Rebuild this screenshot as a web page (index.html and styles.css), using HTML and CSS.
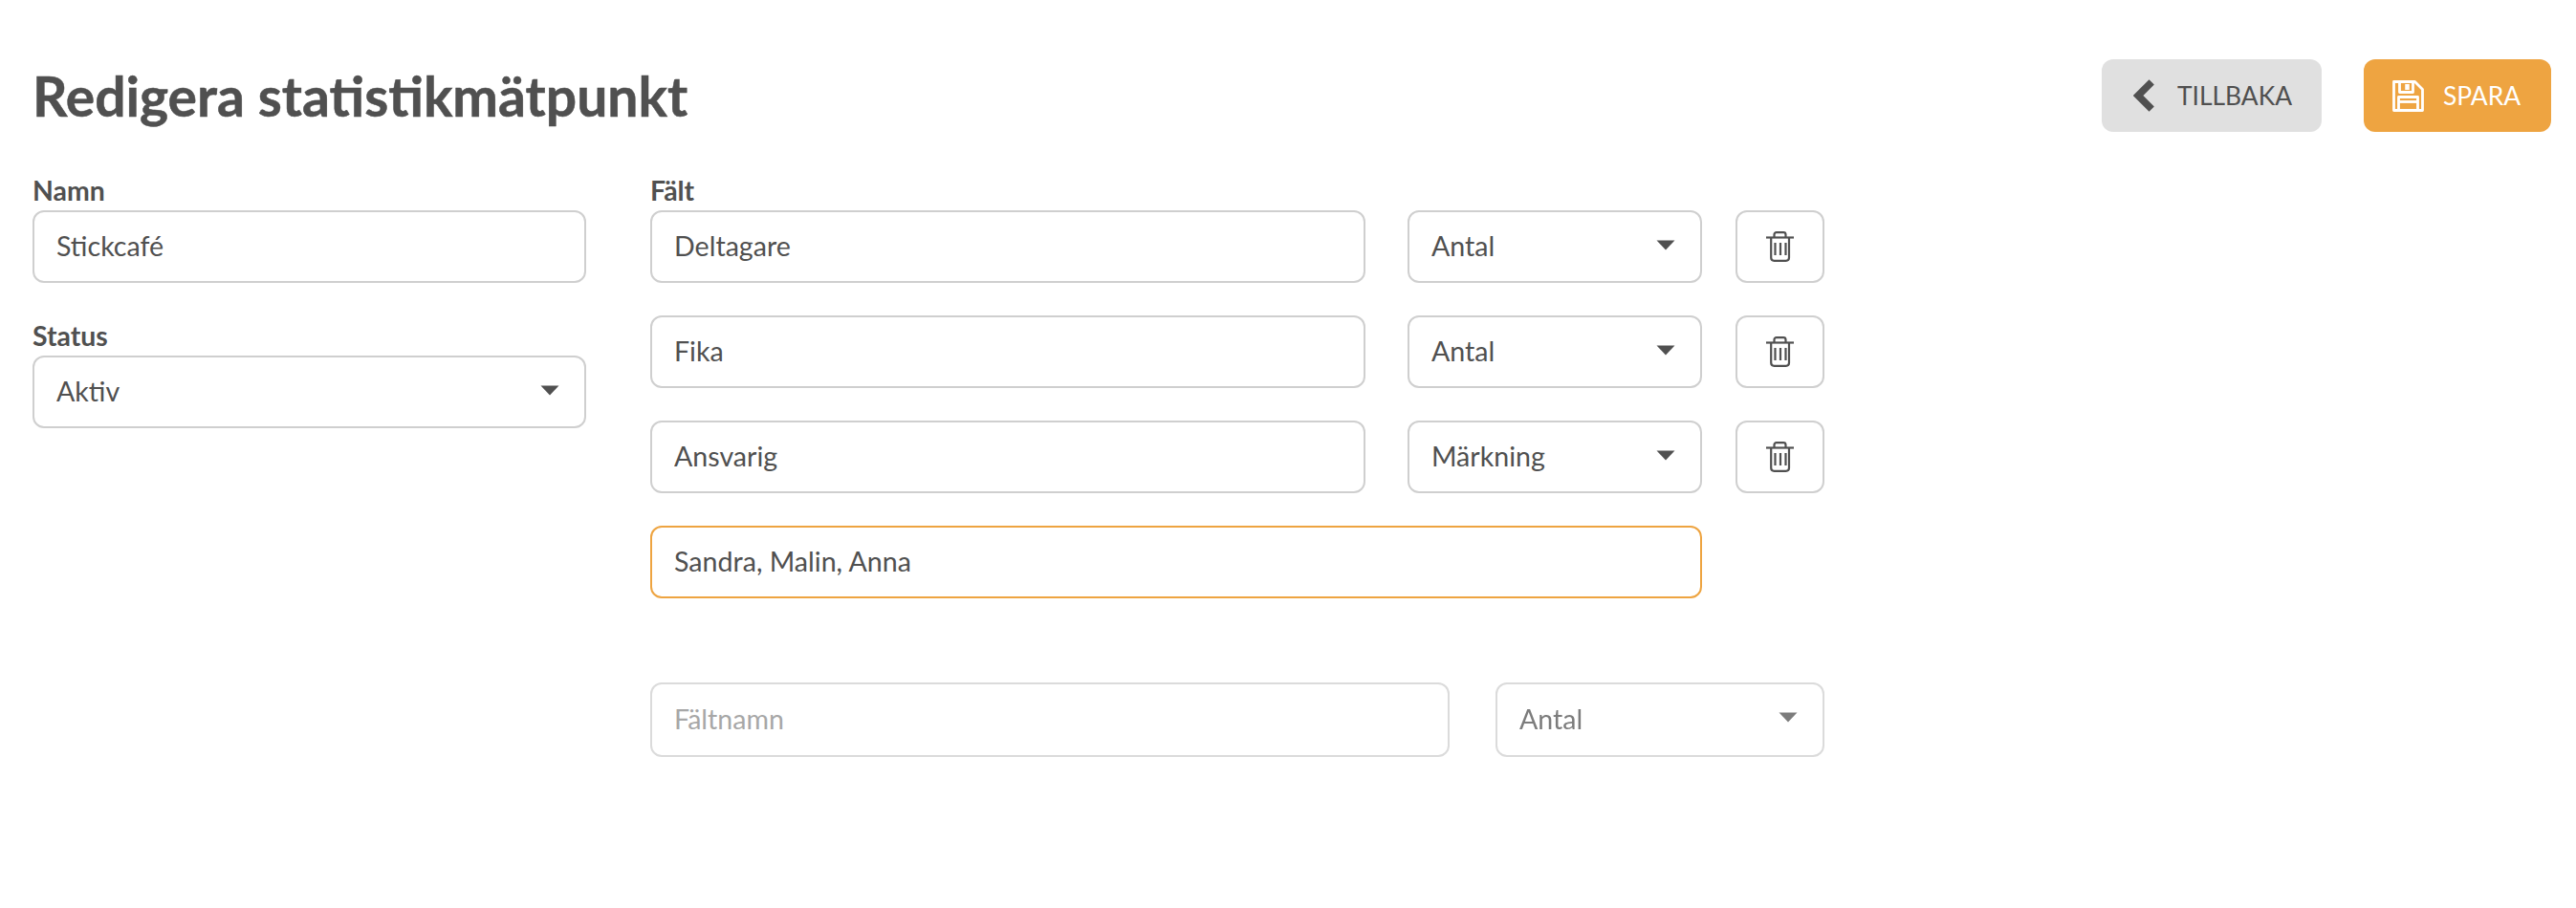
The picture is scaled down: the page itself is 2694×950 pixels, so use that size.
FILE: index.html
```html
<!DOCTYPE html>
<html lang="sv">
<head>
<meta charset="utf-8">
<title>Redigera statistikmätpunkt</title>
<link rel="stylesheet" href="styles.css">
</head>
<body>
<main class="page">
  <header class="head">
    <h1 class="title">Redigera statistikmätpunkt</h1>
    <div class="actions">
      <button class="btn btn-back" type="button">
        <svg class="ico-back" viewBox="0 0 22 34"><path d="M19.200 2.800 5 17l14.200 14.200" fill="none" stroke="currentColor" stroke-width="7.500"/></svg>
        TILLBAKA
      </button>
      <button class="btn btn-save" type="button">
        <svg class="ico-save" viewBox="0 0 33 33" fill="none" stroke="currentColor" stroke-width="2.800" stroke-linejoin="round"><path d="M1.500 1.500h22l8 8v22h-30z"/><path d="M7.500 1.500v11h14v-11"/><path d="M15.500 4v6" stroke-width="4.500"/><path d="M6.500 31.500v-14h20v14"/><path d="M6.500 22.500h20"/></svg>
        SPARA
      </button>
    </div>
  </header>
  <div class="cols">
    <section class="col-left">
      <label class="lbl">Namn</label>
      <input class="ctl ctl-name" value="Stickcafé">
      <label class="lbl lbl-status">Status</label>
      <div class="sel-wrap">
        <select class="ctl sel"><option>Aktiv</option></select>
        <svg class="caret" viewBox="0 0 20 11"><path d="M.5.500h19l-9.500 10z" fill="currentColor"/></svg>
      </div>
    </section>
    <section class="col-right">
      <label class="lbl">Fält</label>
      <div class="row">
        <input class="ctl f-name" value="Deltagare">
        <div class="sel-wrap f-type">
          <select class="ctl sel"><option>Antal</option></select>
          <svg class="caret" viewBox="0 0 20 11"><path d="M.5.500h19l-9.500 10z" fill="currentColor"/></svg>
        </div>
        <button class="del" type="button"><svg class="ico-trash" viewBox="0 0 29 32" fill="none" stroke="currentColor" stroke-width="2.200"><path d="M0 6.500h29"/><path d="M8.500 6V3.500c0-1.500 1-2.300 2.300-2.300h7.400c1.300 0 2.300.8 2.300 2.300V6"/><path d="M5.200 7v20.500c0 2 1.300 3.300 3.300 3.300h12.200c2 0 3.300-1.300 3.300-3.300V7"/><path d="M9.500 12v13M15 12v13M20.500 12v13"/></svg></button>
      </div>
      <div class="row">
        <input class="ctl f-name" value="Fika">
        <div class="sel-wrap f-type">
          <select class="ctl sel"><option>Antal</option></select>
          <svg class="caret" viewBox="0 0 20 11"><path d="M.5.500h19l-9.500 10z" fill="currentColor"/></svg>
        </div>
        <button class="del" type="button"><svg class="ico-trash" viewBox="0 0 29 32" fill="none" stroke="currentColor" stroke-width="2.200"><path d="M0 6.500h29"/><path d="M8.500 6V3.500c0-1.500 1-2.300 2.300-2.300h7.400c1.300 0 2.300.8 2.300 2.300V6"/><path d="M5.200 7v20.500c0 2 1.300 3.300 3.300 3.300h12.200c2 0 3.300-1.300 3.300-3.300V7"/><path d="M9.500 12v13M15 12v13M20.500 12v13"/></svg></button>
      </div>
      <div class="row">
        <input class="ctl f-name" value="Ansvarig">
        <div class="sel-wrap f-type">
          <select class="ctl sel"><option>Märkning</option></select>
          <svg class="caret" viewBox="0 0 20 11"><path d="M.5.500h19l-9.500 10z" fill="currentColor"/></svg>
        </div>
        <button class="del" type="button"><svg class="ico-trash" viewBox="0 0 29 32" fill="none" stroke="currentColor" stroke-width="2.200"><path d="M0 6.500h29"/><path d="M8.500 6V3.500c0-1.500 1-2.300 2.300-2.300h7.400c1.300 0 2.300.8 2.300 2.300V6"/><path d="M5.200 7v20.500c0 2 1.300 3.300 3.300 3.300h12.200c2 0 3.300-1.300 3.300-3.300V7"/><path d="M9.500 12v13M15 12v13M20.500 12v13"/></svg></button>
      </div>
      <div class="row">
        <input class="ctl f-focus" value="Sandra, Malin, Anna">
      </div>
      <div class="row-new">
        <input class="ctl n-name" placeholder="Fältnamn">
        <div class="sel-wrap n-type">
          <select class="ctl sel"><option>Antal</option></select>
          <svg class="caret" viewBox="0 0 20 11"><path d="M.5.500h19l-9.500 10z" fill="currentColor"/></svg>
        </div>
      </div>
    </section>
  </div>
</main>
</body>
</html>
```
FILE: styles.css
```css
* { box-sizing: border-box; }
html, body { margin: 0; background: #fff; }
body {
  font-family: Lato, "Liberation Sans", sans-serif;
  color: #505050;
  font-size: 28.6px;
}
.page { padding: 62px 26px 0 34px; }
.head { display: flex; justify-content: space-between; align-items: flex-start; height: 112px; }
.title { margin: 0; font-size: 57px; line-height: 76px; font-weight: 700; color: #505050; -webkit-text-stroke: .5px #505050; }
.actions { display: flex; gap: 44px; }
.btn {
  height: 76px; border: 0; border-radius: 12px;
  display: flex; align-items: center;
  font: 400 26.4px Lato, sans-serif;
}
.btn-back { width: 230px; background: #e0e0e0; color: #505050; padding-left: 33px; gap: 24px; }
.btn-save { width: 196px; background: #eea441; color: #fff; padding-left: 30px; gap: 20px; }
.ico-back { width: 22px; height: 34px; }
.ico-save { width: 33px; height: 33px; }
.cols { display: flex; gap: 67px; }
.col-left { width: 579px; }
.col-right { width: 1228px; }
.lbl { display: block; height: 46px; line-height: 44px; padding-top: 3px; font-weight: 700; font-size: 28.4px; }
.lbl-status { margin-top: 30px; }
.ctl {
  display: block; width: 100%; height: 76px;
  border: 2px solid #cfcfcf; border-radius: 12px; background: #fff;
  padding: 0 22px 2px 23px; color: #505050;
  font: 400 28.6px Lato, sans-serif; outline: none;
}
.sel { appearance: none; -webkit-appearance: none; }
.sel-wrap { position: relative; }
.caret { position: absolute; right: 28px; top: 31px; width: 20px; height: 11px; color: #505050; }
.row { display: flex; height: 76px; margin-bottom: 34px; }
.f-name { width: 748px; }
.f-type { width: 308px; margin-left: 44px; }
.del {
  width: 93px; height: 76px; margin-left: 35px; padding: 0;
  border: 2px solid #cfcfcf; border-radius: 12px; background: #fff; color: #505050;
  display: flex; align-items: center; justify-content: center;
}
.ico-trash { width: 29px; height: 32px; }
.f-focus { width: 1100px; border-color: #eea441; }
.row-new { display: flex; opacity: .75; margin-top: 88px; }
.row-new .ctl { height: 78px; }
.n-name { width: 836px; }
.n-name::placeholder { color: #8a8a8a; opacity: 1; }
.n-type { width: 344px; margin-left: 48px; }
```
